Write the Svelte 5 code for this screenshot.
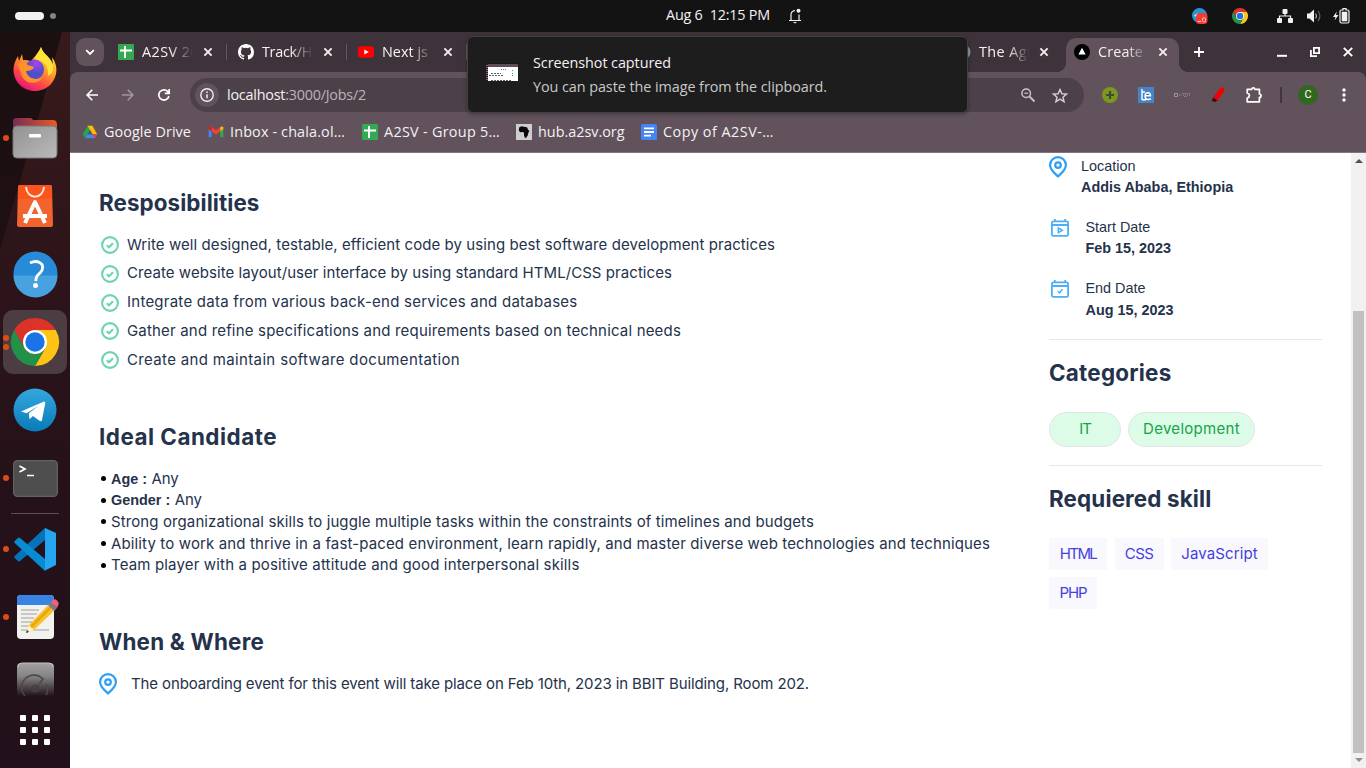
<script>
  // Spreads a label over the width given in its data by adjusting the tracking.
  function fit(node, width) {
    if (!width) return;
    const range = document.createRange();
    range.selectNodeContents(node);
    const natural = range.getBoundingClientRect().width;
    node.style.letterSpacing = (width - natural) / node.textContent.length + 'px';
  }

  const tabs = [
    { icon: 'sheets', title: 'A2SV 20', w: 57 },
    { icon: 'github', title: 'Track/H', w: 50 },
    { icon: 'youtube', title: 'Next js', w: 46 }
  ];
  const bookmarks = [
    { icon: 'drive', title: 'Google Drive', w: 87, slot: 126 },
    { icon: 'gmail', title: 'Inbox - chala.ol…', w: 115, slot: 154 },
    { icon: 'sheets', title: 'A2SV - Group 5…', w: 116, slot: 154 },
    { icon: 'africa', title: 'hub.a2sv.org', w: 86.5, slot: 125 },
    { icon: 'docs', title: 'Copy of A2SV-…', w: 111, slot: 150 }
  ];
  const duties = [
    ['Write well designed, testable, efficient code by using best software development practices', 648],
    ['Create website layout/user interface by using standard HTML/CSS practices', 545],
    ['Integrate data from various back-end services and databases', 450.5],
    ['Gather and refine specifications and requirements based on technical needs', 554],
    ['Create and maintain software documentation', 333]
  ];
  const traits = [
    { key: 'Age :', text: 'Any', w: 27 },
    { key: 'Gender :', text: 'Any', w: 27 },
    { text: 'Strong organizational skills to juggle multiple tasks within the constraints of timelines and budgets', w: 703 },
    { text: 'Ability to work and thrive in a fast-paced environment, learn rapidly, and master diverse web technologies and techniques', w: 879 },
    { text: 'Team player with a positive attitude and good interpersonal skills', w: 468.5 }
  ];
  const skills = [
    ['HTML', 36.5, 58],
    ['CSS', 28.5, 49],
    ['JavaScript', 76.5, 97],
    ['PHP', 27, 48]
  ];
  const dock = [
    { icon: 'firefox', dots: 0 },
    { icon: 'files', dots: 1 },
    { icon: 'software', dots: 0 },
    { icon: 'help', dots: 0 },
    { icon: 'chrome', dots: 2, active: true },
    { icon: 'telegram', dots: 0 },
    { icon: 'terminal', dots: 1 },
    { icon: 'sep' },
    { icon: 'vscode', dots: 1 },
    { icon: 'editor', dots: 1 },
    { icon: 'disk', dots: 0 },
    { icon: 'apps', dots: 0 }
  ];
</script>

{#snippet close()}
  <svg class="x" width="10" height="10" viewBox="0 0 10 10"><path d="M1.4 1.4 8.6 8.6M8.6 1.4 1.4 8.6" stroke="#f1edf0" stroke-width="1.9" /></svg>
{/snippet}

{#snippet pin()}
  <svg width="18" height="22" viewBox="0 0 18 22" fill="none" stroke="#2f9ff5" stroke-width="2.2"><path d="M9 1.2C4.6 1.2 1.1 4.7 1.1 9c0 5.400 4.900 8.300 7.900 11.400C12 17.300 16.900 14.400 16.900 9 16.900 4.700 13.400 1.200 9 1.200Z" stroke-linejoin="round" /><circle cx="9" cy="9.100" r="2.800" /></svg>
{/snippet}

{#snippet chromeLogo(size)}
  <svg width={size} height={size} viewBox="0 0 48 48">
    <path d="M3.200 12A24 24 0 0 1 44.800 12L24 12 13.600 30Z" fill="#dc3228" />
    <path d="M44.800 12A24 24 0 0 1 24 48L34.400 30 24 12Z" fill="#fdc315" />
    <path d="M24 48A24 24 0 0 1 3.200 12L13.600 30A12 12 0 0 0 34.400 30Z" fill="#239148" />
    <circle cx="24" cy="24" r="12" fill="#fff" /><circle cx="24" cy="24" r="9.700" fill="#1b73e8" />
  </svg>
{/snippet}

{#snippet fav(name)}
  <svg class="fav" width="16" height="16" viewBox="0 0 16 16">
    {#if name === 'sheets'}
      <rect width="16" height="16" rx="1" fill="#34a853" /><path d="M2 6.500h12M7 2v12" stroke="#fff" stroke-width="1.900" />
    {:else if name === 'github'}
      <path fill="#fff" d="M8 0C3.580 0 0 3.580 0 8c0 3.540 2.290 6.530 5.470 7.590.4.070.55-.17.55-.38 0-.19-.01-.82-.01-1.490-2.010.37-2.530-.49-2.690-.94-.09-.23-.48-.94-.82-1.130-.28-.15-.68-.52-.01-.53.63-.01 1.080.58 1.230.82.72 1.210 1.870.87 2.330.66.07-.52.28-.87.51-1.070-1.780-.2-3.640-.89-3.640-3.950 0-.87.31-1.590.82-2.150-.08-.2-.36-1.020.08-2.120 0 0 .67-.21 2.200.82a7.600 7.600 0 0 1 4 0c1.530-1.040 2.200-.82 2.200-.82.44 1.100.16 1.920.08 2.120.51.56.82 1.270.82 2.150 0 3.070-1.870 3.750-3.650 3.950.29.25.54.73.54 1.480 0 1.070-.01 1.930-.01 2.200 0 .21.15.46.55.38A8 8 0 0 0 16 8c0-4.420-3.580-8-8-8Z" />
    {:else if name === 'youtube'}
      <rect y="2.300" width="16" height="11.500" rx="3" fill="#f00" /><path d="M6.300 5.500 10.800 8 6.300 10.500Z" fill="#fff" />
    {:else if name === 'drive'}
      <path d="M5.600 1.800h4.800L8 6 3.200 14.200.8 10.200Z" fill="#24a651" /><path d="M10.400 1.800 15.200 10.200h-4.800L5.600 1.800Z" fill="#fbbc04" /><path d="M3.200 14.200 5.600 10.200h9.600l-2.400 4Z" fill="#4285f4" /><path d="M12.800 14.200 10.400 10.200h4.800Z" fill="#ea4335" /><path d="M8 6 10.400 10.200H5.600Z" fill="#61525c" />
    {:else if name === 'gmail'}
      <path d="M.7 4v9.300h3V7.500Z" fill="#4285f4" /><path d="M15.300 4v9.300h-3V7.500Z" fill="#34a853" /><path d="M.7 5V3.600C.7 2 2.300 2 3.300 2.600L8 6.200 12.300 3v4.400L8 10.700 3.700 7.400Z" fill="#ea4335" /><path d="M.7 5V3.600C.7 2.500 2.300 2 3.700 3v4.400Z" fill="#c5221f" /><path d="M15.300 5V3.600C15.300 2.200 13.700 2 12.300 3v4.400Z" fill="#fbbc04" />
    {:else if name === 'africa'}
      <rect width="16" height="16" fill="#cfcdce" /><path d="M3.500 3 6 2.200l1.500.6 3.500.5L12.200 6l1.200.7-1 2-.6 2.500-1.600 2.600-1.200.3L8 11.300V8.800L6.800 8 4 8.200 2.700 6Z" fill="#080808" />
    {:else if name === 'docs'}
      <rect width="16" height="16" rx="1.500" fill="#4285f4" /><path d="M3 4.300h10M3 8h10M3 11.700h7" stroke="#fff" stroke-width="1.800" />
    {:else if name === 'vercel'}
      <circle cx="8" cy="8" r="8" fill="#000" /><path d="M8 3.800 11.600 10.500H4.400Z" fill="#fff" />
    {:else}
      <circle cx="8" cy="8" r="7.500" fill="#8b99a3" />
    {/if}
  </svg>
{/snippet}

<div class="desktop">
  <header class="topbar">
    <div class="spaces"><i class="pill"></i><i class="spot"></i></div>
    <div class="clock"><span class="ui" use:fit={104}>Aug 6&nbsp; 12:15 PM</span>
      <svg width="14" height="16" viewBox="0 0 14 16" fill="none"><path d="M1 12.500h12M3 12V6.500C3 4.500 4.500 3 7 2.500M11 12V6.500" stroke="#f2f2f2" stroke-width="1.200" /><path d="M5 14h4l-2 1.500Z" fill="#f2f2f2" /><circle cx="10.500" cy="2.800" r="2" fill="#f2f2f2" /></svg>
    </div>
    <div class="tray">
      <svg width="16" height="16" viewBox="0 0 16 16"><circle cx="7.500" cy="7.500" r="7.500" fill="#2497d6" /><path d="M2 8 5.500 5v4Z" fill="#fff" /><rect x="4" y="5" width="11.500" height="11" rx="3.500" fill="#f23c34" /><path d="M5.500 13.500h3.500" stroke="#ffc5c0" /><rect x="10.500" y="9.800" width="3" height="4" rx="1" fill="none" stroke="#ffc5c0" /></svg>
      {@render chromeLogo(16)}
      <svg width="16" height="14" viewBox="0 0 16 14" fill="#f2f2f2"><rect x="5.500" width="5" height="5" rx="1" /><rect y="9" width="5" height="5" rx="1" /><rect x="11" y="9" width="5" height="5" rx="1" /><path d="M8 4v3M2.500 10V7h11v3" fill="none" stroke="#f2f2f2" stroke-width="1.200" /></svg>
      <svg width="16" height="16" viewBox="0 0 16 16"><path d="M1 5.500h2.500L8 1.500v13L3.500 10.500H1Z" fill="#f2f2f2" /><path d="M9.500 5.500q2 2.500 0 5" stroke="#aaa" fill="none" stroke-width="1.200" /><path d="M12 3q3.800 5 0 10" stroke="#666" fill="none" stroke-width="1.200" /></svg>
      <svg width="17" height="16" viewBox="0 0 17 16"><path d="M3.800 3.500 0 9h2.500L1.500 12.500 5.500 7H3Z" fill="#f2f2f2" /><path d="M9 2h1V.6h3V2h1.500q1.500 0 1.500 1.500v10q0 1.500-1.500 1.500H8.500Q7 15 7 13.500v-10Q7 2 8.500 2Z" fill="none" stroke="#f2f2f2" stroke-width="1.200" /><rect x="8.700" y="3.700" width="5.600" height="9.600" fill="#f2f2f2" /></svg>
    </div>
  </header>

  <div class="body">
    <nav class="dock">
      {#each dock as item}
        <div class="slot {item.icon}" class:active={item.active}>
          {#if item.dots}<span class="dots">{#each Array(item.dots) as _}<i></i>{/each}</span>{/if}
          {#if item.icon === 'firefox'}
            <svg width="44" height="46" viewBox="0 0 44 46"><defs><linearGradient id="ff" x1=".8" y1=".1" x2=".3" y2="1"><stop offset="0" stop-color="#ffec3e" /><stop offset=".4" stop-color="#ff9b29" /><stop offset=".7" stop-color="#ff4b47" /><stop offset="1" stop-color="#e5107d" /></linearGradient><radialGradient id="fp" cx=".6" cy=".2"><stop offset="0" stop-color="#a942ed" /><stop offset="1" stop-color="#4d51c9" /></radialGradient></defs><path d="M28 1c1 7 10 9 12 18l-1-8c7 10 5 20-1 27-9 10-25 9-33-1-6-8-6-18 0-27l1 5 3-7 1 6c3 0 6 0 8 2 2-5 7-7 10-15Z" fill="url(#ff)" /><path d="M28 1c-1 4-6 8-6 12 5 2 14 2 13 17l4-3C44 14 31 11 28 1Z" fill="#ffe239" /><ellipse cx="21.500" cy="23.500" rx="9.500" ry="10" fill="url(#fp)" /><path d="M5 18c4-3 7-1 10 1l6 2c-1 3-5 4-8 4 1 7 11 11 17 5-4 10-20 9-22-3Z" fill="#ff922a" /></svg>
          {:else if item.icon === 'files'}
            <svg width="46" height="42" viewBox="0 0 46 42"><defs><linearGradient id="fo"><stop stop-color="#762c55" /><stop offset="1" stop-color="#ed5a20" /></linearGradient><linearGradient id="fg" x2="1" y2="1"><stop stop-color="#929292" /><stop offset="1" stop-color="#bababa" /></linearGradient></defs><path d="M1 14V4q0-3 3-3h14q2 0 3 2h20q4 0 4 5v8H1Z" fill="url(#fo)" /><rect x="1" y="9" width="44" height="32" rx="4" fill="url(#fg)" stroke="#777" /><rect x="17" y="17" width="12" height="3.400" rx="1" fill="#fff" /></svg>
          {:else if item.icon === 'software'}
            <svg width="36" height="44" viewBox="0 0 36 44"><path d="M3 1h30q2 0 2 2l1 38q0 2-2 2H2q-2 0-2-2L1 3Q1 1 3 1Z" fill="#f2632d" /><path d="M1 15V3q0-2 2-2h30q2 0 2 2v12Z" fill="#f9551d" /><path d="M9 3c1 13 17 13 18 0" stroke="#ffe5dc" stroke-width="2" fill="none" /><path d="M8 39 18 18l10 21M6 32h24" stroke="#fff" stroke-width="4" fill="none" stroke-linejoin="round" /></svg>
          {:else if item.icon === 'help'}
            <svg width="45" height="45" viewBox="0 0 45 45"><circle cx="22.500" cy="22.500" r="22" fill="#278bd9" /><path d="M.5 24.500h44A22 22 0 0 1 .5 24.500Z" fill="#47a2df" /><path d="M17 12q5-2.500 9-.8c5.500 2.300 4 7.800 1 10.800-3 3-4 3.500-4.200 8" stroke="#fff" stroke-width="2.800" fill="none" /><circle cx="22.500" cy="34.500" r="2.500" fill="#fff" /></svg>
          {:else if item.icon === 'chrome'}
            {@render chromeLogo(48)}
          {:else if item.icon === 'telegram'}
            <svg width="44" height="44" viewBox="0 0 44 44"><defs><linearGradient id="tg" x2="0" y2="1"><stop stop-color="#35a7df" /><stop offset="1" stop-color="#087bb8" /></linearGradient></defs><circle cx="22" cy="22" r="21.500" fill="url(#tg)" /><path d="M8 23.500 31 13.500q1.500 0 1.200 2L29 32q-.5 2-2.500.8L20 28l-3.500 3.200-.7-6L26 17.500 13.500 25.300Z" fill="#fff" /></svg>
          {:else if item.icon === 'terminal'}
            <svg width="45" height="37" viewBox="0 0 45 37"><rect x=".6" y=".6" width="43.800" height="35.800" rx="4" fill="#4e4e4e" stroke="#626262" stroke-width="1.200" /><path d="M6.500 6 12 9 6.500 12M14 15.500h7" stroke="#fff" stroke-width="1.700" fill="none" /></svg>
          {:else if item.icon === 'vscode'}
            <svg width="43" height="43" viewBox="0 0 43 43"><path d="M31 0v12L6 33q-1 1-2 0L.7 30q-1-1 0-2L31 0Z" fill="#0872b8" /><path d="M31 43V31L6 10q-1-1-2 0L.7 13q-1 1 0 2L31 43Z" fill="#078bd3" /><path d="M31 0 42 5v32L31 42.500Z" fill="#25a5ef" /></svg>
          {:else if item.icon === 'editor'}
            <svg width="46" height="46" viewBox="0 0 46 46"><rect x="5" y="1" width="37" height="44" rx="4" fill="#f2f2f1" /><path d="M5 11V5q0-4 4-4h29q4 0 4 4v6Z" fill="#3984e3" /><path d="M9 16h18M9 20h16M9 24h13M9 28h11M9 32h8M9 36h28" stroke="#bfbbb0" stroke-width="1.700" /><path d="M14 39 17 31 37 10 43 16 22 36Z" fill="#f9c32f" /><path d="M14 39 17 31 22 36Z" fill="#fff1c7" /><path d="m14 39 1-3 2 2Z" fill="#333" /><path d="m18 32 20-20 2 2-20 20Z" fill="#e8a70c" /><path d="m36 11 3-3 6 6-3 3Z" fill="#777d87" /><path d="m39 8 2-2q2-1.500 4 .5t1.500 4L45 14Z" fill="#f26075" /></svg>
          {:else if item.icon === 'disk'}
            <svg width="37" height="34" viewBox="0 0 37 34"><defs><linearGradient id="dk" x2="0" y2="1"><stop stop-color="#a2a2a2" /><stop offset=".4" stop-color="#858585" /><stop offset="1" stop-color="#22131a" /></linearGradient></defs><path d="M0 34V5q0-4 4-4h29q4 0 4 4v29Z" fill="url(#dk)" /><path d="M1 5q0-4 4-4h27q4 0 4 4" fill="none" stroke="#c2c2c2" /><path d="M8 34a12 12 0 0 1 18-17l-4 5M29 22q3 6 0 11" fill="none" stroke="#4d484c" stroke-width="1.600" /><circle cx="18.500" cy="26.500" r="3" fill="none" stroke="#454045" stroke-width="2" /></svg>
          {:else if item.icon === 'apps'}
            <svg width="30" height="30" viewBox="0 0 30 30" fill="#fff">{#each [0, 12, 24] as y}{#each [0, 12, 24] as x}<rect {x} {y} width="6" height="6" rx="1" />{/each}{/each}</svg>
          {/if}
        </div>
      {/each}
    </nav>

    <section class="browser">
      <div class="tabs">
        <div class="search"><svg width="10" height="7" viewBox="0 0 10 7"><path d="m1.200 1.200 3.800 3.800 3.800-3.800" stroke="#fff" stroke-width="1.900" fill="none" /></svg></div>
        {#each tabs as t}
          <div class="tab">{@render fav(t.icon)}<span class="ui title"><b use:fit={t.w}>{t.title}</b></span>{@render close()}<i class="bar"></i></div>
        {/each}
        <div class="hiddentabs"></div>
        <div class="tab agile">{@render fav('globe')}<span class="ui title"><b use:fit={52}>The Agi</b></span>{@render close()}</div>
        <div class="tab current">{@render fav('vercel')}<span class="ui title"><b use:fit={45}>Create</b></span>{@render close()}</div>
        <svg class="plus" width="12" height="12" viewBox="0 0 12 12"><path d="M6 1v10M1 6h10" stroke="#fff" stroke-width="1.800" /></svg>
        <div class="winbtns">
          <svg width="10" height="10" viewBox="0 0 10 10"><path d="M0 8.800h10" stroke="#fff" stroke-width="2" /></svg>
          <svg width="10" height="10" viewBox="0 0 10 10" fill="none" stroke="#fff" stroke-width="1.800"><path d="M3.900.9h5.200v5.200H3.900ZM.9 3v6.100H7" /></svg>
          <svg width="10" height="10" viewBox="0 0 10 10"><path d="m.8.8 8.400 8.400M9.200.8.8 9.200" stroke="#fff" stroke-width="1.900" /></svg>
        </div>
      </div>

      <div class="chrome-ui">
        <div class="toolbar">
          <svg class="nav" width="12" height="12" viewBox="0 0 12 12" fill="none" stroke="#fff" stroke-width="1.600"><path d="M12 6H1.200M6.300.8 1.100 6l5.200 5.200" /></svg>
          <svg class="nav" width="12" height="12" viewBox="0 0 12 12" fill="none" stroke="#a0969d" stroke-width="1.600"><path d="M0 6h10.800M5.700.8 10.900 6 5.700 11.200" /></svg>
          <svg class="nav" width="12" height="12" viewBox="0 0 12 12" fill="none" stroke="#fff" stroke-width="1.700"><path d="M10.900 7A5.100 5.100 0 1 1 9.800 2.600L11 4M11.200 0v4.400H6.800" /></svg>
          <div class="url">
            <span class="info"><svg width="14" height="14" viewBox="0 0 14 14"><circle cx="7" cy="7" r="6.200" fill="none" stroke="#f1eef0" stroke-width="1.400" /><path d="M7 6.200v4M7 3.600v1.500" stroke="#f1eef0" stroke-width="1.500" /></svg></span>
            <span class="ui addr" use:fit={139}>localhost<em>:3000/Jobs/2</em></span>
            <svg class="lens" width="14" height="14" viewBox="0 0 14 14" fill="none" stroke="#cbc3c9"><circle cx="5.200" cy="5.200" r="4.300" stroke-width="1.500" /><path d="m8.500 8.500 5 5" stroke-width="1.800" /><path d="M3.300 5.200h3.800" stroke-width="1.200" /></svg>
            <svg width="16" height="15" viewBox="0 0 16 15"><path d="m8 1.500 1.900 4.200 4.600.4-3.500 3.100 1 4.400L8 11.200 4 13.600l1-4.400L1.500 6.100l4.600-.4Z" fill="none" stroke="#d2cbd0" stroke-width="1.500" /></svg>
          </div>
          <div class="ext">
            <svg width="16" height="16" viewBox="0 0 16 16"><circle cx="8" cy="8" r="8" fill="#79991e" /><path d="M8 4v8M4 8h8" stroke="#46433a" stroke-width="2.200" /></svg>
            <svg width="16" height="16" viewBox="0 0 16 16"><rect width="16" height="16" fill="#4684c7" /><path d="M4 2v11M4 12.700h4M4 5h3M7.500 8.700h5C12.500 5 7 4.500 7 9c0 4 4 4 6 2.700" stroke="#fff" stroke-width="1.400" fill="none" /></svg>
            <svg width="16" height="16" viewBox="0 0 16 16" fill="none" stroke="#9b9198"><rect x=".5" y="6.500" width="3" height="3" /><path d="M5 8h3" stroke-dasharray="1 .5" /><path d="M8.500 6.500h7.500M9 8h7M10 9.500h4" stroke-dasharray="1 1" /></svg>
            <svg width="16" height="16" viewBox="0 0 16 16"><path d="m9.500 2 3-2 2 2-.7 3-6.300 8.500L3 10.500Z" fill="#f20000" /><path d="M3 10.500 7.500 13.500 5 15 2 13.800Z" fill="#171415" /><path d="m1.500 14 2 1-2 1Z" fill="#f20000" /></svg>
            <svg width="17" height="16" viewBox="0 0 17 16"><path d="M1.200 2.300H5.800a1.500 1.500 0 0 1 3 0h4.600V7a1.700 1.700 0 0 1 0 3.400v4.400H1.200V11c3-1 3-4 0-5Z" fill="none" stroke="#fff" stroke-width="1.700" stroke-linejoin="round" /></svg>
          </div>
          <i class="divider"></i>
          <span class="avatar">C</span>
          <svg width="4" height="14" viewBox="0 0 4 14" fill="#fff"><circle cx="2" cy="2" r="1.700" /><circle cx="2" cy="7" r="1.700" /><circle cx="2" cy="12" r="1.700" /></svg>
        </div>
        <div class="bookmarks">
          {#each bookmarks as b}
            <div class="bm" style:width="{b.slot}px">{@render fav(b.icon)}<span class="ui" use:fit={b.w}>{b.title}</span></div>
          {/each}
        </div>
      </div>

      <div class="view">
        <main>
          <h2><span use:fit={160.500}>Resposibilities</span></h2>
          <ul class="duties">
            {#each duties as [text, w]}
              <li><svg width="18" height="18" viewBox="0 0 18 18" fill="none" stroke="#6dd3b0"><circle cx="9" cy="9" r="7.900" stroke-width="2.100" /><path d="m5.800 9.200 2.200 2L12 7.200" stroke-width="2.100" /></svg><span use:fit={w}>{text}</span></li>
            {/each}
          </ul>
          <h2 class="ideal"><span use:fit={178}>Ideal Candidate</span></h2>
          <ul class="traits">
            {#each traits as t}
              <li><i></i>{#if t.key}<strong>{t.key}</strong>{/if}<span use:fit={t.w}>{t.text}</span></li>
            {/each}
          </ul>
          <h2 class="when"><span use:fit={165}>When &amp; Where</span></h2>
          <p class="place">{@render pin()}<span use:fit={678}>The onboarding event for this event will take place on Feb 10th, 2023 in BBIT Building, Room 202.</span></p>
        </main>
        <aside>
          <div class="fact loc">{@render pin()}<div>Location<strong>Addis Ababa, Ethiopia</strong></div></div>
          <div class="fact">
            <svg width="18" height="18" viewBox="0 0 18 18" fill="none" stroke="#4caef6" stroke-width="1.800"><rect x=".9" y="2.400" width="16.200" height="14.500" rx="1.500" /><path d="M1 6h16M3.800 0v3M14.200 0v3" /><path d="m7.300 9 4 2.300-4 2.300Z" stroke-width="1.500" /></svg>
            <div>Start Date<strong>Feb 15, 2023</strong></div>
          </div>
          <div class="fact">
            <svg width="18" height="18" viewBox="0 0 18 18" fill="none" stroke="#4caef6" stroke-width="1.800"><rect x=".9" y="2.400" width="16.200" height="14.500" rx="1.500" /><path d="M1 6h16M3.800 0v3M14.200 0v3" /><path d="m6.800 11.200 1.700 1.700 3-3.600" stroke-width="1.600" /></svg>
            <div>End Date<strong>Aug 15, 2023</strong></div>
          </div>
          <hr />
          <h2><span use:fit={122.500}>Categories</span></h2>
          <div class="cats"><span class="cat it"><b use:fit={11.500}>IT</b></span><span class="cat dev"><b use:fit={97}>Development</b></span></div>
          <hr />
          <h2><span use:fit={162.500}>Requiered skill</span></h2>
          <div class="skills">
            {#each skills as [name, w, box]}
              <span class="skill" style:width="{box}px"><b use:fit={w}>{name}</b></span>
            {/each}
          </div>
        </aside>
        <div class="scroll"><i class="up"></i><i class="thumb"></i><i class="down"></i></div>
      </div>
    </section>
  </div>

  <div class="toast">
    <svg width="32" height="18" viewBox="0 0 32 18"><rect width="32" height="18" fill="#fff" /><path d="M0 0h32v1H0Z" fill="#171717" /><path d="M2 1h30v3H2Z" fill="#604c59" /><path d="M0 1h2v17H0Z" fill="#39151c" /><path d="M1 2v15" stroke="#b2bbd0" stroke-dasharray="1 1" /><path d="M5 10.500h10M3 12.500h15M5 17.500h20" stroke="#52616d" stroke-dasharray="2 1" /><path d="M15 6.500h6M26 7.500h2M26 10.500h2M26 12.500h2" stroke="#438ba7" stroke-dasharray="1 1" /></svg>
    <div class="ui msg"><span use:fit={138}>Screenshot captured</span><span class="sub" use:fit={294}>You can paste the image from the clipboard.</span></div>
  </div>
</div>

<style>
  :global(body) { margin: 0; overflow: hidden; }
  * { box-sizing: border-box; }
  svg { display: block; flex: none; overflow: visible; }
  i, em { font-style: normal; }
  .desktop { position: relative; width: 1366px; height: 768px; display: flex; flex-direction: column; overflow: hidden; }
  .ui { font-family: 'Open Sans', 'Noto Sans', sans-serif; font-size: 14.400px; color: #f4f1f3; white-space: nowrap; }
  b { font-weight: 400; }

  .topbar { height: 32px; flex: none; background: #131313; display: grid; grid-template-columns: 666px 1fr 174px; align-items: center; }
  .spaces { display: flex; align-items: center; gap: 6px; padding-left: 15px; }
  .pill { width: 29px; height: 8px; border-radius: 4px; background: #f2f2f2; }
  .spot { width: 6px; height: 6px; border-radius: 50%; background: #858585; }
  .clock { display: flex; align-items: center; gap: 18px; }
  .clock .ui { line-height: 30px; height: 32px; }
  .tray { display: flex; align-items: center; }
  .tray svg:nth-child(2) { margin-left: 24px; }
  .tray svg:nth-child(3) { margin-left: 29px; }
  .tray svg:nth-child(4) { margin-left: 13px; }
  .tray svg:nth-child(5) { margin-left: 11px; }

  .body { flex: 1; display: flex; min-height: 0; }
  .dock { position: relative; width: 70px; flex: none; display: flex; flex-direction: column; padding-top: 4px; background: linear-gradient(#1c0f10, #1e1013 30%, #221018 65%, #22111a); isolation: isolate; }
  .dock::before { content: ''; position: absolute; inset: 0; z-index: -1; background: linear-gradient(#371a1b, #2c141a 35%, #241119 65%, #22111a); clip-path: polygon(62px 0, 70px 0, 70px 100%, 0 100%, 0 218px, 40px 80px); }
  .slot { position: relative; height: 68px; flex: none; display: flex; align-items: center; justify-content: center; }
  .slot.firefox, .slot.help { padding-bottom: 2px; }
  .slot.active::before { content: ''; position: absolute; inset: 2px 3px; border-radius: 10px; background: #4c3d42; z-index: -1; }
  .slot.sep { height: 3px; }
  .slot.sep::before { content: ''; width: 48px; height: 1px; background: #5c4d53; }
  .slot.disk { height: 45px; align-items: flex-end; }
  .dots { position: absolute; left: 3px; top: 0; height: 100%; display: flex; flex-direction: column; justify-content: center; gap: 3px; }
  .dots i { width: 6px; height: 6px; border-radius: 50%; background: #dc4b18; }

  .browser { flex: 1; display: flex; flex-direction: column; min-width: 0; background: #3e333a; }
  .tabs { height: 40px; flex: none; display: flex; align-items: center; padding-left: 6px; }
  .search { width: 28px; height: 28px; border-radius: 9px; background: #61525c; display: grid; place-items: center; margin-right: 3px; }
  .tab { width: 120px; height: 34px; display: flex; align-items: center; padding-left: 11px; }
  .title { width: 52px; margin-left: 8px; overflow: hidden; line-height: 24px; mask-image: linear-gradient(90deg, #000 55%, transparent 98%); }
  .title b { display: inline-block; }
  .x { margin-left: 9px; }
  .bar { width: 1.500px; height: 16px; margin-left: 13px; background: #65575f; }
  .hiddentabs { width: 477px; }
  .agile { width: 122px; }
  .agile .x { margin-left: 8px; }
  .current { position: relative; width: 113px; height: 34px; margin-top: 6px; padding: 0 0 6px 8px; background: #61525c; border-radius: 10px 10px 0 0; }
  .current::before, .current::after { content: ''; position: absolute; bottom: 0; width: 10px; height: 10px; }
  .current::before { left: -10px; background: radial-gradient(circle at 0 0, transparent 10px, #61525c 10.500px); }
  .current::after { right: -10px; background: radial-gradient(circle at 100% 0, transparent 10px, #61525c 10.500px); }
  .current .x { margin-left: 8px; }
  .plus { margin-left: 14px; }
  .winbtns { margin-left: auto; display: flex; gap: 23px; padding-right: 13px; }

  .chrome-ui { height: 81px; flex: none; background: #61525c; border-radius: 8px 8px 0 0; border-bottom: 1px solid #827580; }
  .toolbar { height: 46px; display: flex; align-items: center; padding: 0 20px 0 16px; }
  .nav { margin-right: 24px; }
  .url { width: 894px; height: 34px; margin-left: -4px; border-radius: 17px; background: #4c4149; display: flex; align-items: center; padding: 0 16px 0 5px; }
  .info { width: 24px; height: 24px; border-radius: 50%; background: #61525c; display: grid; place-items: center; }
  .addr { margin-left: 8px; padding-bottom: 2px; }
  .addr em { color: #bcb2b9; }
  .lens { margin-left: auto; margin-right: 17px; }
  .ext { display: flex; gap: 20px; margin-left: 18px; }
  .divider { width: 2px; height: 16px; margin-left: 17px; background: #41363d; }
  .avatar { width: 20px; height: 20px; margin: 0 auto 0 16px; border-radius: 50%; background: #31681d; color: #fff; font: 11px/20px Roboto, sans-serif; text-align: center; }
  .bookmarks { display: flex; height: 28px; align-items: center; padding-left: 12px; }
  .bm { display: flex; align-items: center; gap: 6px; flex: none; }
  .bm .ui { padding-bottom: 2px; }

  .view { flex: 1; min-height: 0; background: #fff; display: flex; color: #25324b; font-family: Inter, 'Noto Sans', sans-serif; font-size: 15px; overflow: hidden; }
  main { width: 979px; padding: 34px 0 0 29px; flex: none; white-space: nowrap; }
  h2 { margin: 0; font-size: 22.400px; line-height: 32px; font-weight: 700; white-space: nowrap; }
  ul { list-style: none; margin: 0; padding: 0; }
  .duties { padding-top: 11.200px; }
  .duties li { height: 28.800px; display: flex; align-items: center; gap: 8px; padding-left: 2px; }
  .duties svg { position: relative; top: .5px; }
  .duties li span { padding-bottom: 1px; }
  .ideal { margin-top: 46.800px; }
  .traits { padding-top: 15px; }
  .traits li { height: 21.600px; display: flex; align-items: center; padding-left: 2px; }
  .traits li > span { padding-bottom: 1px; }
  .traits i { width: 5px; height: 5px; border-radius: 50%; background: #000; margin-right: 5px; }
  .traits strong { font-family: 'Liberation Sans', sans-serif; font-size: 14.400px; margin-right: 4.500px; }
  .when { margin-top: 49.800px; }
  .place { margin: 11.600px 0 0; height: 28.800px; display: flex; align-items: center; gap: 14px; }

  aside { width: 273px; flex: none; padding-top: 2.600px; }
  .fact { height: 61.200px; display: flex; gap: 16.500px; padding-left: 2px; font-family: 'Liberation Sans', sans-serif; font-size: 14.400px; line-height: 21.600px; }
  .fact svg { margin-top: 2px; }
  .fact.loc { gap: 14px; padding-left: 0; }
  .fact.loc svg { margin-top: 0; }
  .fact strong { display: block; }
  hr { margin: 0; border: 0; border-top: 1px solid #e5e7eb; }
  hr + h2 { margin-top: 17px; }
  .cats { display: flex; gap: 7px; margin: 23px 0 18px; }
  .cat { height: 35px; padding-bottom: 2px; border: 1px solid #e2e5e8; border-radius: 18px; background: #dcfce7; color: #16a34a; display: flex; align-items: center; justify-content: center; }
  .it { width: 72px; }
  .dev { width: 127px; }
  .skills { display: flex; flex-wrap: wrap; gap: 7px 7.500px; width: 240px; margin-top: 23px; }
  .skill { height: 32px; padding-bottom: 2px; background: #f8f8fd; color: #4640de; display: flex; align-items: center; justify-content: center; }
  .scroll { width: 15px; margin-left: auto; background: #f1f1f1; display: flex; flex-direction: column; align-items: center; }
  .up, .down { border: 4px solid transparent; width: 0; height: 0; }
  .up { border-top-width: 0; border-bottom: 4px solid #505050; margin-top: 6px; }
  .thumb { width: 11px; height: 442px; margin-top: 148px; background: #c1c1c1; }
  .down { border-bottom-width: 0; border-top: 4px solid #909090; margin-top: 5px; }

  .toast { position: absolute; left: 467px; top: 36px; width: 501px; height: 77px; border: 1px solid #424042; border-radius: 6px; background: #1d1d1d; box-shadow: 0 1px 4px #0005; display: flex; align-items: center; gap: 15px; padding: 0 0 7px 18px; }
  .toast svg { margin-top: 2px; }
  .msg { display: flex; flex-direction: column; align-items: flex-start; line-height: 24px; padding-top: 8px; }
  .sub { color: #c9c9c9; }
</style>
